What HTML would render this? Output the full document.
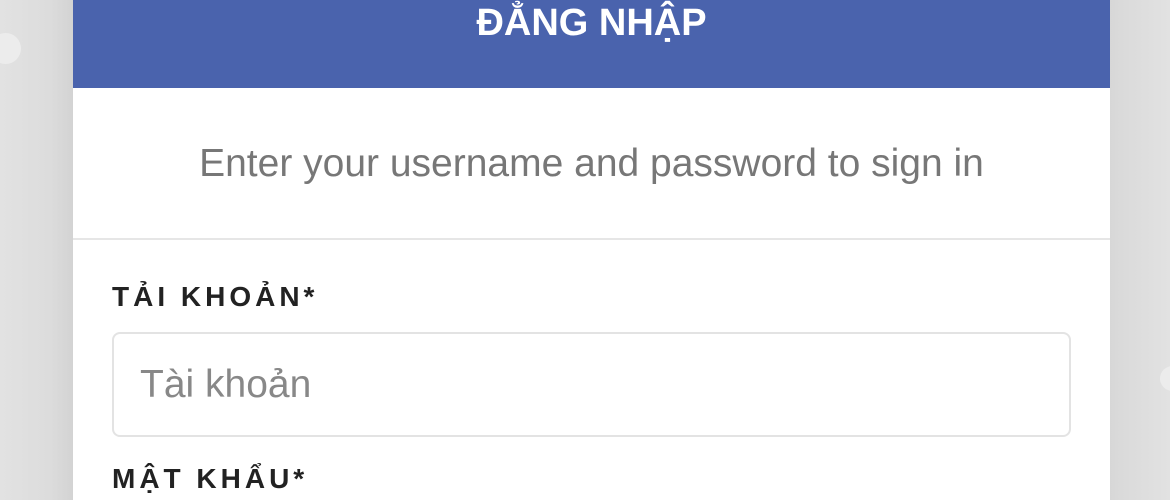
<!DOCTYPE html>
<html><head><meta charset="utf-8"><style>
body{margin:0;width:1170px;height:500px;overflow:hidden;background:linear-gradient(90deg,#e2e2e2 0,#dcdcdc 50px,#d3d3d3 73px,#d3d3d3 1097px,#dadada 1120px,#e2e2e2 1170px);font-family:"Liberation Sans",sans-serif;position:relative}
.card{position:absolute;left:73px;top:0;width:1037px;height:500px;background:#fff}
.hd{height:88px;background:#4a63ad;color:#fff;font-weight:bold;font-size:38px;text-align:center;line-height:46px}
.sub{height:150px;border-bottom:2px solid #e6e6e6;text-align:center;color:#777;font-size:39px;line-height:152px}
.lbl{position:absolute;left:39px;font-weight:bold;font-size:28px;letter-spacing:4px;color:#222}
.inp{position:absolute;left:39px;top:332px;border:2px solid #e3e3e3;border-radius:8px;color:#888;font-size:39px;line-height:102px;padding-left:26px;box-sizing:border-box;width:959px;height:105px}
.dot{position:absolute;border-radius:50%;background:#ececec}
</style></head><body>
<div class="dot" style="left:-10px;top:33px;width:31px;height:31px"></div>
<div class="dot" style="left:1160px;top:366px;width:25px;height:25px"></div>
<div class="card">
<div class="hd">ĐẲNG NHẬP</div>
<div class="sub">Enter your username and password to sign in</div>
<div class="lbl" style="top:281px">TẢI KHOẢN*</div>
<div class="inp">Tài khoản</div>
<div class="lbl" style="top:463px">MẬT KHẨU*</div>
</div>
</body></html>
